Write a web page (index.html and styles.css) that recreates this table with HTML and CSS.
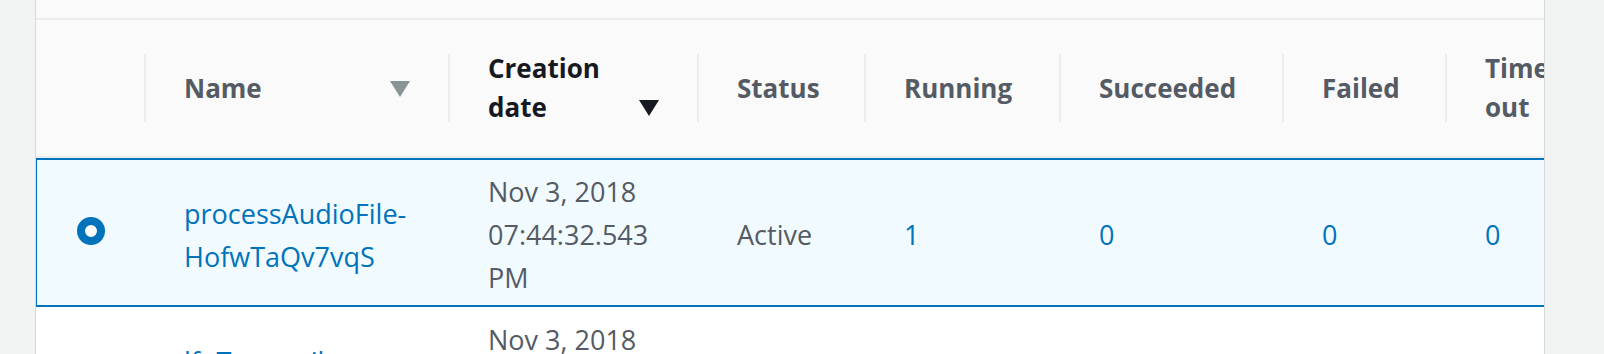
FILE: index.html
```html
<!DOCTYPE html>
<html lang="en">
<head>
<meta charset="utf-8">
<title>State machines</title>
<link rel="stylesheet" href="styles.css">
</head>
<body>
<div class="page">
  <div class="panel">
    <div class="panel-top"></div>
    <table class="grid">
      <colgroup>
        <col class="c-sel"><col class="c-name"><col class="c-date"><col class="c-status"><col class="c-run"><col class="c-ok"><col class="c-fail"><col class="c-to"><col class="c-ab">
      </colgroup>
      <thead>
        <tr>
          <th class="h-sel"></th>
          <th><div class="th-inner"><span class="label">Name</span><svg class="sort sort-off" width="20" height="16" viewBox="0 0 20 16"><polygon points="0,0 20,0 10,16"/></svg></div></th>
          <th class="sorted"><div class="th-inner"><span class="label">Creation date</span><svg class="sort sort-on" width="20" height="16" viewBox="0 0 20 16"><polygon points="0,0 20,0 10,16"/></svg></div></th>
          <th><div class="th-inner"><span class="label">Status</span></div></th>
          <th><div class="th-inner"><span class="label">Running</span></div></th>
          <th><div class="th-inner"><span class="label">Succeeded</span></div></th>
          <th><div class="th-inner"><span class="label">Failed</span></div></th>
          <th><div class="th-inner"><span class="label">Timed out</span></div></th>
          <th><div class="th-inner"><span class="label">Aborted</span></div></th>
        </tr>
      </thead>
      <tbody>
        <tr class="row selected">
          <td class="sel"><span class="radio checked"></span></td>
          <td><a class="link" href="#">processAudioFile-HofwTaQv7vqS</a></td>
          <td>Nov 3, 2018<br>07:44:32.543<br>PM</td>
          <td>Active</td>
          <td><a class="link" href="#">1</a></td>
          <td><a class="link" href="#">0</a></td>
          <td><a class="link" href="#">0</a></td>
          <td><a class="link" href="#">0</a></td>
          <td><a class="link" href="#">0</a></td>
        </tr>
        <tr class="row">
          <td class="sel"><span class="radio"></span></td>
          <td><a class="link" href="#">lfnTranscribe-K2bdLtfQx8Wp</a></td>
          <td>Nov 3, 2018<br>07:41:08.116<br>PM</td>
          <td>Active</td>
          <td><a class="link" href="#">0</a></td>
          <td><a class="link" href="#">2</a></td>
          <td><a class="link" href="#">0</a></td>
          <td><a class="link" href="#">0</a></td>
          <td><a class="link" href="#">0</a></td>
        </tr>
      </tbody>
    </table>
  </div>
</div>
</body>
</html>
```

FILE: styles.css
```css
html, body {
  margin: 0;
  padding: 0;
}

body {
  background: #f2f3f3;
  font-family: "Open Sans", "Noto Sans", "Liberation Sans", sans-serif;
  color: #545b64;
  overflow: hidden;
}

.page {
  display: flex;
  padding-left: 35px;
  height: 354px;
}

.panel {
  box-sizing: border-box;
  width: 1510px;
  height: 354px;
  border-left: 1px solid #d5dbdb;
  border-right: 1px solid #d5dbdb;
  background: #ffffff;
  overflow: hidden;
}

.panel-top {
  height: 18px;
  background: #fafafa;
  border-bottom: 2px solid #eaeded;
}

.grid {
  table-layout: fixed;
  width: 1669px;
  border-collapse: separate;
  border-spacing: 0;
}

.c-sel { width: 108px; }
.c-name { width: 304px; }
.c-date { width: 249px; }
.c-status { width: 167px; }
.c-run { width: 195px; }
.c-ok { width: 223px; }
.c-fail { width: 163px; }
.c-to { width: 180px; }
.c-ab { width: 80px; }

.grid th {
  position: relative;
  height: 136px;
  padding: 0 38px 0 40px;
  background: #fafafa;
  border-bottom: 2px solid #eaeded;
  text-align: left;
  vertical-align: middle;
  font-size: 26px;
  font-weight: 700;
  line-height: 39px;
  color: #545b64;
}

.grid th:not(.h-sel)::before {
  content: "";
  position: absolute;
  left: 0;
  top: 34px;
  bottom: 34px;
  width: 2px;
  background: #eaeded;
}

.grid th.sorted {
  color: #16191f;
}

.th-inner {
  display: flex;
  align-items: flex-end;
  justify-content: space-between;
  gap: 12px;
}

.label {
  display: block;
}

.sort {
  flex: none;
  margin-bottom: 11px;
}

.sort-off { fill: #879596; }
.sort-on { fill: #16191f; }

.grid td {
  padding: 10px 20px 6px 40px;
  vertical-align: middle;
  font-size: 27px;
  line-height: 43px;
  color: #545b64;
}

.row.selected td {
  background: #f1faff;
  border-top: 2px solid #0073bb;
  border-bottom: 2px solid #0073bb;
}

.row.selected td:first-child {
  border-left: 1px solid #0073bb;
}

.row:not(.selected) td {
  padding-top: 11px;
}

.link {
  color: #0073bb;
  text-decoration: none;
}

.radio {
  display: block;
  box-sizing: border-box;
  width: 28px;
  height: 28px;
  margin-bottom: 7px;
  border-radius: 50%;
  border: 4px solid #aab7b8;
  background: #ffffff;
}

.radio.checked {
  border: 8px solid #0073bb;
  background: #ffffff;
}
```
